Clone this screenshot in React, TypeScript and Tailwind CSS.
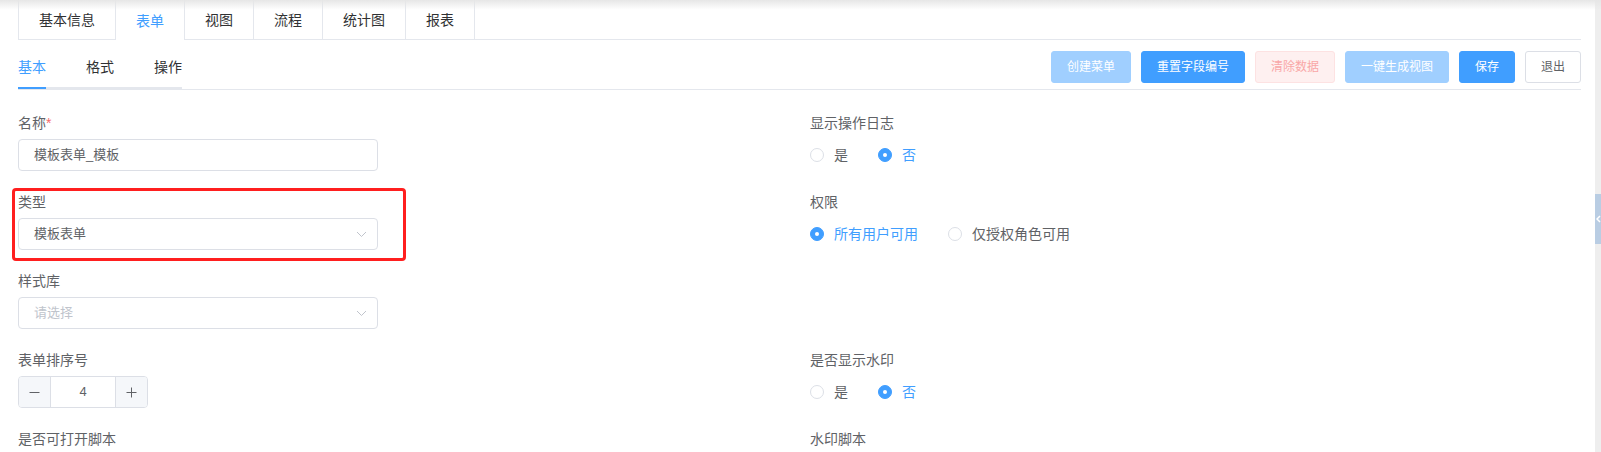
import React from "react";

const FONT = "font-['Liberation_Sans','Noto_Sans_CJK_SC',sans-serif]";

const TOP_TABS = ["基本信息", "表单", "视图", "流程", "统计图", "报表"];
const SUB_TABS = ["基本", "格式", "操作"];

type Btn = { text: string; kind: "primary" | "primaryOff" | "dangerOff" | "plain" };
const BUTTONS: Btn[] = [
  { text: "创建菜单", kind: "primaryOff" },
  { text: "重置字段编号", kind: "primary" },
  { text: "清除数据", kind: "dangerOff" },
  { text: "一键生成视图", kind: "primaryOff" },
  { text: "保存", kind: "primary" },
  { text: "退出", kind: "plain" },
];

const BTN_CLS: Record<Btn["kind"], string> = {
  primary: "bg-[#409eff] border-[#409eff] text-white",
  primaryOff: "bg-[#a0cfff] border-[#a0cfff] text-white",
  dangerOff: "bg-[#fef0f0] border-[#fde2e2] text-[#f9a7a7]",
  plain: "bg-white border-[#dcdfe6] text-[#606266]",
};

function Chevron() {
  return (
    <svg width="11" height="7" viewBox="0 0 11 7" fill="none">
      <path d="M1 1 L5.5 5.5 L10 1" stroke="#c0c4cc" strokeWidth="1" />
    </svg>
  );
}

function Label({ text, required }: { text: string; required?: boolean }) {
  return (
    <div className="mb-[5px] h-[22px] text-[14px] leading-[22px] text-[#606266]">
      {text}
      {required && <span className="text-[#f56c6c]">*</span>}
    </div>
  );
}

function Select({ value, placeholder }: { value?: string; placeholder?: string }) {
  return (
    <div className="flex h-[32px] w-[360px] items-center justify-between rounded-[4px] border border-[#dcdfe6] pl-[15px] pr-[10px] text-[13px]">
      <span className={value ? "text-[#606266]" : "text-[#c0c4cc]"}>{value ?? placeholder}</span>
      <Chevron />
    </div>
  );
}

function Radio({ label, checked }: { label: string; checked?: boolean }) {
  return (
    <label className="mr-[30px] flex items-center">
      <span
        className={`flex h-[14px] w-[14px] items-center justify-center rounded-full border ${
          checked ? "border-[#409eff] bg-[#409eff]" : "border-[#dcdfe6] bg-white"
        }`}
      >
        {checked && <span className="h-[4px] w-[4px] rounded-full bg-white" />}
      </span>
      <span className={`ml-[10px] text-[14px] ${checked ? "text-[#409eff]" : "text-[#606266]"}`}>{label}</span>
    </label>
  );
}

function RadioGroup({ items, value }: { items: string[]; value: string }) {
  return (
    <div className="flex h-[32px] items-center">
      {items.map((it) => (
        <Radio key={it} label={it} checked={it === value} />
      ))}
    </div>
  );
}

function Item({ children }: { children: React.ReactNode }) {
  return <div className="relative mb-[20px]">{children}</div>;
}

function NumberInput() {
  return (
    <div className="flex h-[32px] w-[130px] overflow-hidden rounded-[4px] border border-[#dcdfe6]">
      <div className="flex w-[32px] items-center justify-center border-r border-[#dcdfe6] bg-[#f5f7fa]">
        <svg width="11" height="11" viewBox="0 0 11 11">
          <path d="M0.5 5.5 H10.5" stroke="#606266" strokeWidth="1" />
        </svg>
      </div>
      <div className="flex flex-1 items-center justify-center text-[13px] text-[#606266]">4</div>
      <div className="flex w-[32px] items-center justify-center border-l border-[#dcdfe6] bg-[#f5f7fa]">
        <svg width="11" height="11" viewBox="0 0 11 11">
          <path d="M0.5 5.5 H10.5 M5.5 0.5 V10.5" stroke="#606266" strokeWidth="1" />
        </svg>
      </div>
    </div>
  );
}

export default function App() {
  return (
    <div className={`relative flex h-[452px] w-full overflow-hidden bg-white ${FONT}`}>
      <div className="min-w-0 flex-1 pl-[18px] pr-[14px]">
        {/* top card tabs */}
        <div className="flex h-[40px] border-b border-[#e4e7ed]">
          {TOP_TABS.map((t, i) => (
            <div
              key={t}
              className={`flex items-center px-5 pt-[2px] text-[14px] border-r border-[#e4e7ed] ${
                i === 0 ? "border-l" : ""
              } ${t === "表单" ? "h-[40px] bg-white text-[#409eff]" : "h-[39px] text-[#303133]"}`}
            >
              {t}
            </div>
          ))}
        </div>

        {/* sub tabs + actions */}
        <div className="mt-[7px] flex h-[43px] items-start justify-between border-b border-[#e4e7ed]">
          <div className="flex border-b-2 border-[#e4e7ed]">
            {SUB_TABS.map((t, i) => (
              <div
                key={t}
                className={`relative flex h-[40px] items-center text-[14px] ${i === 0 ? "pr-5" : i === SUB_TABS.length - 1 ? "pl-5" : "px-5"} ${
                  i === 0 ? "text-[#409eff]" : "text-[#303133]"
                }`}
              >
                {t}
                {i === 0 && <span className="absolute -bottom-[2px] left-0 h-[2px] w-[28px] bg-[#409eff]" />}
              </div>
            ))}
          </div>
          <div className="mt-[4px] flex gap-[10px]">
            {BUTTONS.map((b) => (
              <button
                key={b.text}
                type="button"
                className={`h-[32px] rounded-[3px] border px-[15px] text-[12px] ${BTN_CLS[b.kind]}`}
              >
                {b.text}
              </button>
            ))}
          </div>
        </div>

        {/* form */}
        <div className="mt-[22px] grid grid-cols-[792px_1fr]">
          <Item>
            <Label text="名称" required />
            <div className="flex h-[32px] w-[360px] items-center rounded-[4px] border border-[#dcdfe6] px-[15px] text-[13px] text-[#606266]">
              模板表单_模板
            </div>
          </Item>
          <Item>
            <Label text="显示操作日志" />
            <RadioGroup items={["是", "否"]} value="否" />
          </Item>

          <Item>
            <div className="pointer-events-none absolute -left-[6px] -top-[3px] h-[73px] w-[394px] rounded-[4px] border-[3px] border-[#ff1f1f]" />
            <Label text="类型" />
            <Select value="模板表单" />
          </Item>
          <Item>
            <Label text="权限" />
            <RadioGroup items={["所有用户可用", "仅授权角色可用"]} value="所有用户可用" />
          </Item>

          <Item>
            <Label text="样式库" />
            <Select placeholder="请选择" />
          </Item>
          <Item>
            <div className="h-[59px]" />
          </Item>

          <Item>
            <Label text="表单排序号" />
            <NumberInput />
          </Item>
          <Item>
            <Label text="是否显示水印" />
            <RadioGroup items={["是", "否"]} value="否" />
          </Item>

          <Item>
            <Label text="是否可打开脚本" />
            <div className="h-[32px]" />
          </Item>
          <Item>
            <Label text="水印脚本" />
            <div className="h-[32px]" />
          </Item>
        </div>
      </div>

      {/* right side strip */}
      <div className="flex w-[6px] flex-col bg-[#eeeeee]">
        <div className="h-[194px]" />
        <div className="flex h-[50px] items-center justify-center bg-[#b9cde3]">
          <svg width="5" height="8" viewBox="0 0 5 8">
            <path d="M4 1 L1 4 L4 7" stroke="#ffffff" strokeWidth="1.5" fill="none" />
          </svg>
        </div>
      </div>

      {/* top shadow */}
      <div className="pointer-events-none absolute left-0 right-0 top-0 h-[10px] bg-gradient-to-b from-[#e6e6e6] to-transparent" />
    </div>
  );
}
